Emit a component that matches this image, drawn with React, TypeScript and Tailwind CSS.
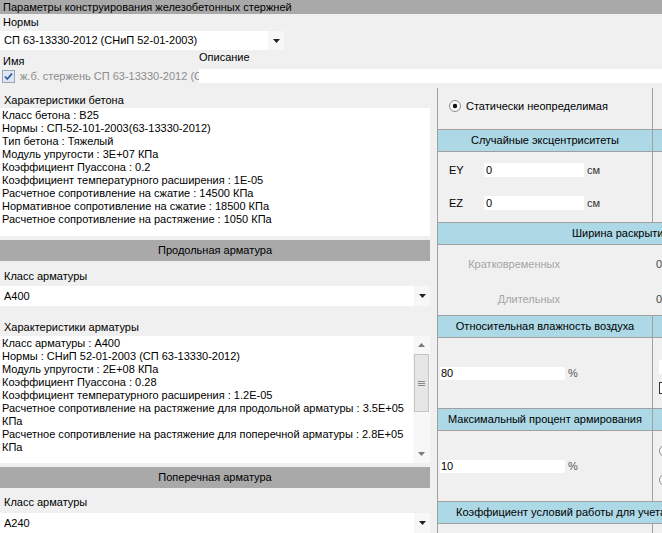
import React from "react";

const DropArrow = () => (
  <svg width="7" height="4" viewBox="0 0 7 4" className="block">
    <path d="M0 0h7L3.5 4z" fill="#222" />
  </svg>
);

const Combo = ({ value, width, height }: { value: string; width: string; height: string }) => (
  <div className={`${width} ${height} bg-white flex items-center`}>
    <span className="flex-1 pl-[4px] whitespace-nowrap overflow-hidden">{value}</span>
    <span className="w-[16px] h-full flex items-center justify-center bg-[#f7f7f7]">
      <DropArrow />
    </span>
  </div>
);

const concreteLines = [
  "Класс бетона : B25",
  "Нормы : СП-52-101-2003(63-13330-2012)",
  "Тип бетона : Тяжелый",
  "Модуль упругости : 3E+07 КПа",
  "Коэффициент Пуассона : 0.2",
  "Коэффициент температурного расширения : 1E-05",
  "Расчетное сопротивление на сжатие : 14500 КПа",
  "Нормативное сопротивление на сжатие : 18500 КПа",
  "Расчетное сопротивление на растяжение : 1050 КПа",
];

const rebarLines = [
  "Класс арматуры : A400",
  "Нормы : СНиП 52-01-2003 (СП 63-13330-2012)",
  "Модуль упругости : 2E+08 КПа",
  "Коэффициент Пуассона : 0.28",
  "Коэффициент температурного расширения : 1.2E-05",
  "Расчетное сопротивление на растяжение для продольной арматуры : 3.5E+05",
  "КПа",
  "Расчетное сопротивление на растяжение для поперечной арматуры : 2.8E+05",
  "КПа",
];

const SectionBar = ({ title }: { title: string }) => (
  <div className="h-[21px] bg-[#a9a9a9] flex items-center justify-center">{title}</div>
);

const Header = ({ left, right, span }: { left?: string; right?: string; span?: React.ReactNode }) =>
  span ? (
    <div className="h-[23px] border-y border-[#a0a0a0] bg-[#add8e6] flex items-center whitespace-nowrap">{span}</div>
  ) : (
    <div className="h-[23px] border-y border-[#a0a0a0] bg-[#add8e6] flex">
      <div className="w-[215px] border-r border-[#a0a0a0] flex items-center justify-center whitespace-nowrap">{left}</div>
      <div className="flex-1 flex items-center justify-center whitespace-nowrap">{right}</div>
    </div>
  );

const Radio = ({ checked }: { checked?: boolean }) => (
  <svg width="12" height="12" viewBox="0 0 12 12" className="block shrink-0">
    <circle cx="6" cy="6" r="5.5" fill="#fafafa" stroke="#8c8c8c" />
    {checked && <circle cx="6" cy="6" r="2.2" fill="#111" />}
  </svg>
);

export default function App() {
  return (
    <div className="w-[662px] h-[533px] overflow-hidden bg-[#f0f0f0] text-[11px] leading-none text-black font-['Liberation_Sans',Arial,sans-serif]">
      <div className="h-[14px] bg-[#a9a9a9] pl-[3px] flex items-center whitespace-nowrap">
        Параметры конструирования железобетонных стержней
      </div>
      <div className="h-[17px] pl-[3px] pt-[3px]">Нормы</div>
      <Combo value="СП 63-13330-2012 (СНиП 52-01-2003)" width="w-[284px]" height="h-[19px]" />
      <div className="h-[19px] flex">
        <div className="w-[199px] pl-[3px] pt-[6px]">Имя</div>
        <div className="pt-[2px]">Описание</div>
      </div>
      <div className="h-[14px] flex">
        <div className="w-[199px] flex items-center pl-[2px] overflow-hidden">
          <svg width="13" height="13" viewBox="0 0 13 13" className="block shrink-0">
            <rect x="0.5" y="0.5" width="12" height="12" fill="#dde6f2" stroke="#9aa5b4" />
            <path d="M3 6.5l2.3 2.5L10 3.6" fill="none" stroke="#2d5da8" strokeWidth="1.8" />
          </svg>
          <span className="ml-[5px] text-[#8d8d8d] whitespace-nowrap">ж.б. стержень СП 63-13330-2012 (СНиП 52-01-2003)</span>
        </div>
        <div className="flex-1 bg-white" />
      </div>

      <div className="mt-[5px] h-[445px] flex">
        {/* left column */}
        <div className="w-[430px] flex flex-col shrink-0">
          <div className="h-[20px] pl-[4px] pt-[7px]">Характеристики бетона</div>
          <div className="h-[128px] bg-white pl-[2px] pt-[1px] leading-[13px]">
            {concreteLines.map((l) => (
              <div key={l} className="whitespace-nowrap">{l}</div>
            ))}
          </div>
          <div className="h-[4px]" />
          <SectionBar title="Продольная арматура" />
          <div className="h-[25px] pl-[4px] pt-[10px]">Класс арматуры</div>
          <Combo value="A400" width="w-[430px]" height="h-[20px]" />
          <div className="h-[30px] pl-[4px] pt-[16px]">Характеристики арматуры</div>
          <div className="h-[127px] bg-white flex">
            <div className="flex-1 pl-[2px] pt-[1px] leading-[13px] overflow-hidden">
              {rebarLines.map((l, i) => (
                <div key={i} className="whitespace-nowrap">{l}</div>
              ))}
            </div>
            <div className="w-[17px] flex flex-col bg-[#f7f7f7]">
              <div className="h-[18px] flex items-center justify-center">
                <svg width="7" height="4" viewBox="0 0 7 4"><path d="M0 4h7L3.5 0z" fill="#7a7a7a" /></svg>
              </div>
              <div className="mx-[1px] h-[58px] bg-[#e6e6e6] border border-[#c4c4c4] flex flex-col items-center justify-center gap-[1px]">
                <div className="w-[7px] h-px bg-[#8a8a8a]" />
                <div className="w-[7px] h-px bg-[#8a8a8a]" />
                <div className="w-[7px] h-px bg-[#8a8a8a]" />
              </div>
              <div className="flex-1" />
              <div className="h-[18px] flex items-center justify-center">
                <svg width="7" height="4" viewBox="0 0 7 4"><path d="M0 0h7L3.5 4z" fill="#7a7a7a" /></svg>
              </div>
            </div>
          </div>
          <div className="h-[4px]" />
          <SectionBar title="Поперечная арматура" />
          <div className="h-[25px] pl-[4px] pt-[9px]">Класс арматуры</div>
          <Combo value="A240" width="w-[430px]" height="h-[20px]" />
        </div>

        {/* right column */}
        <div className="ml-[7px] flex-1 border-l border-[#a0a0a0] overflow-hidden">
          <div className="w-[400px]">
            <div className="h-[41px] flex">
              <div className="w-[215px] border-r border-[#a0a0a0] pl-[11px] pt-[12px] flex items-start gap-[5px] whitespace-nowrap">
                <Radio checked />
                <span className="mt-[1px]">Статически неопределимая</span>
              </div>
            </div>
            <Header left="Случайные эксцентриситеты" right="" />
            <div className="h-[70px] flex">
              <div className="w-[215px] border-r border-[#a0a0a0] pl-[11px] pt-[11px] flex flex-col gap-[19px]">
                {["EY", "EZ"].map((k) => (
                  <div key={k} className="h-[14px] flex items-center">
                    <span className="w-[35px]">{k}</span>
                    <span className="w-[100px] h-full bg-white flex items-center pl-[2px]">0</span>
                    <span className="ml-[3px] text-[#333]">см</span>
                  </div>
                ))}
              </div>
            </div>
            <Header span={<span className="pl-[134px]">Ширина раскрытия трещин</span>} />
            <div className="h-[70px] pt-[13px] flex flex-col gap-[22px]">
              {["Кратковременных", "Длительных"].map((k) => (
                <div key={k} className="h-[13px] flex items-center">
                  <span className="w-[122px] text-right text-[#a5a5a5] whitespace-nowrap">{k}</span>
                  <span className="ml-[96px] text-[#444]">0</span>
                </div>
              ))}
            </div>
            <Header left="Относительная влажность воздуха" right="" />
            <div className="h-[70px] flex">
              <div className="w-[215px] border-r border-[#a0a0a0] pl-[2px] flex items-center">
                <span className="w-[125px] h-[13px] bg-white flex items-center pl-[1px]">80</span>
                <span className="ml-[3px] text-[#555]">%</span>
              </div>
              <div className="flex-1 pl-[6px] pt-[22px] flex flex-col gap-[8px]">
                <div className="w-[60px] h-[14px] bg-white" />
                <div className="w-[12px] h-[12px] border border-[#333] bg-white" />
              </div>
            </div>
            <Header left="Максимальный процент армирования" right="" />
            <div className="h-[70px] flex">
              <div className="w-[215px] border-r border-[#a0a0a0] pl-[2px] flex items-center">
                <span className="w-[125px] h-[13px] bg-white flex items-center pl-[1px]">10</span>
                <span className="ml-[3px] text-[#555]">%</span>
              </div>
              <div className="flex-1 pl-[6px] pt-[14px] flex flex-col gap-[17px]">
                <Radio />
                <Radio />
              </div>
            </div>
            <Header span={<span className="pl-[18px]">Коэффициент условий работы для учета сейсмического воздействия</span>} />
            <div className="h-[30px] flex">
              <div className="w-[215px] border-r border-[#a0a0a0]" />
            </div>
          </div>
        </div>
      </div>
    </div>
  );
}
